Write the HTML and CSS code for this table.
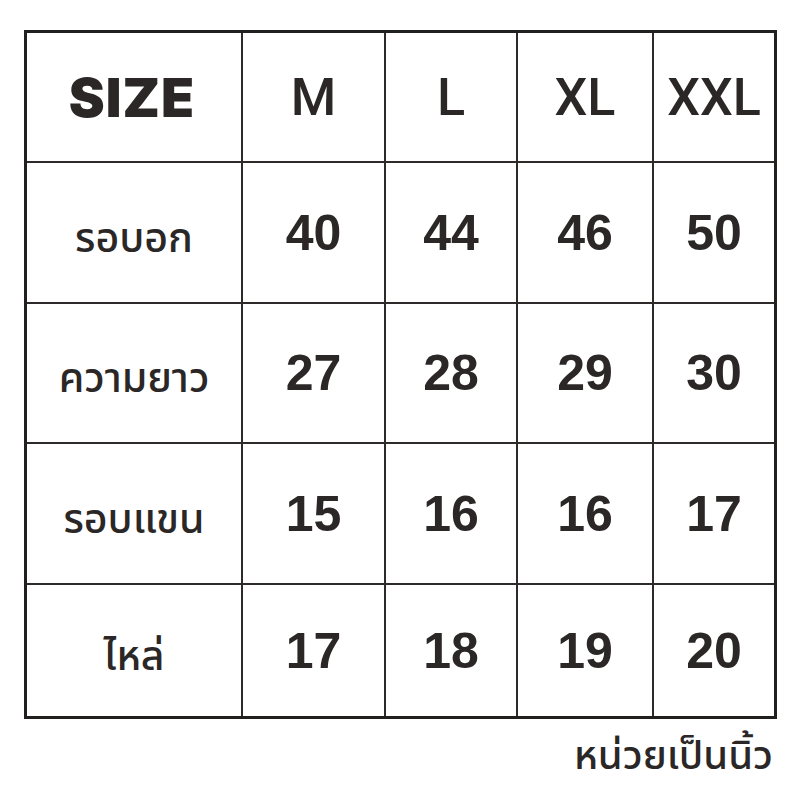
FILE: index.html
```html
<!DOCTYPE html>
<html lang="th">
<head>
<meta charset="utf-8">
<link rel="stylesheet" href="styles.css">
</head>
<body>
<div class="page">
  <div class="chart">
    <div class="cell size">SIZE</div>
    <div class="cell head">M</div>
    <div class="cell head">L</div>
    <div class="cell head">XL</div>
    <div class="cell head">XXL</div>

    <div class="cell label">รอบอก</div>
    <div class="cell num">40</div>
    <div class="cell num">44</div>
    <div class="cell num">46</div>
    <div class="cell num">50</div>

    <div class="cell label">ความยาว</div>
    <div class="cell num">27</div>
    <div class="cell num">28</div>
    <div class="cell num">29</div>
    <div class="cell num">30</div>

    <div class="cell label">รอบแขน</div>
    <div class="cell num">15</div>
    <div class="cell num">16</div>
    <div class="cell num">16</div>
    <div class="cell num">17</div>

    <div class="cell label">ไหล่</div>
    <div class="cell num">17</div>
    <div class="cell num">18</div>
    <div class="cell num">19</div>
    <div class="cell num">20</div>
  </div>
  <div class="note">หน่วยเป็นนิ้ว</div>
</div>
</body>
</html>
```

FILE: styles.css
```css
html, body {
  margin: 0;
  padding: 0;
  background: #ffffff;
}

.page {
  padding: 30px 0 0 24px;
  width: 753px;
}

.chart {
  display: grid;
  grid-template-columns: 214px 141px 130px 134px 120px;
  grid-template-rows: 128px 139px 138px 139px 131px;
  gap: 2px;
  background: #2e2a2a;
  border: 3px solid #221f1f;
  width: 747px;
}

.cell {
  background: #ffffff;
  display: flex;
  align-items: center;
  justify-content: center;
  color: #2b2727;
}

.size {
  font-family: "Inter", "Lato", sans-serif;
  font-weight: 900;
  font-size: 54px;
  letter-spacing: 1px;
  padding-right: 4px;
}

.head {
  font-family: "Roboto", "Liberation Sans", sans-serif;
  font-weight: 500;
  font-size: 52px;
}

.num {
  font-family: "Liberation Sans", "Noto Sans", sans-serif;
  font-weight: 700;
  font-size: 50px;
}

.label {
  font-family: "Noto Sans Thai", "Noto Sans", sans-serif;
  font-weight: 500;
  font-size: 41px;
  padding-top: 12px;
}

.note {
  text-align: right;
  font-family: "Noto Sans Thai", "Noto Sans", sans-serif;
  font-weight: 500;
  font-size: 40px;
  color: #2b2727;
  margin-top: 8px;
  padding-right: 4px;
}
```
